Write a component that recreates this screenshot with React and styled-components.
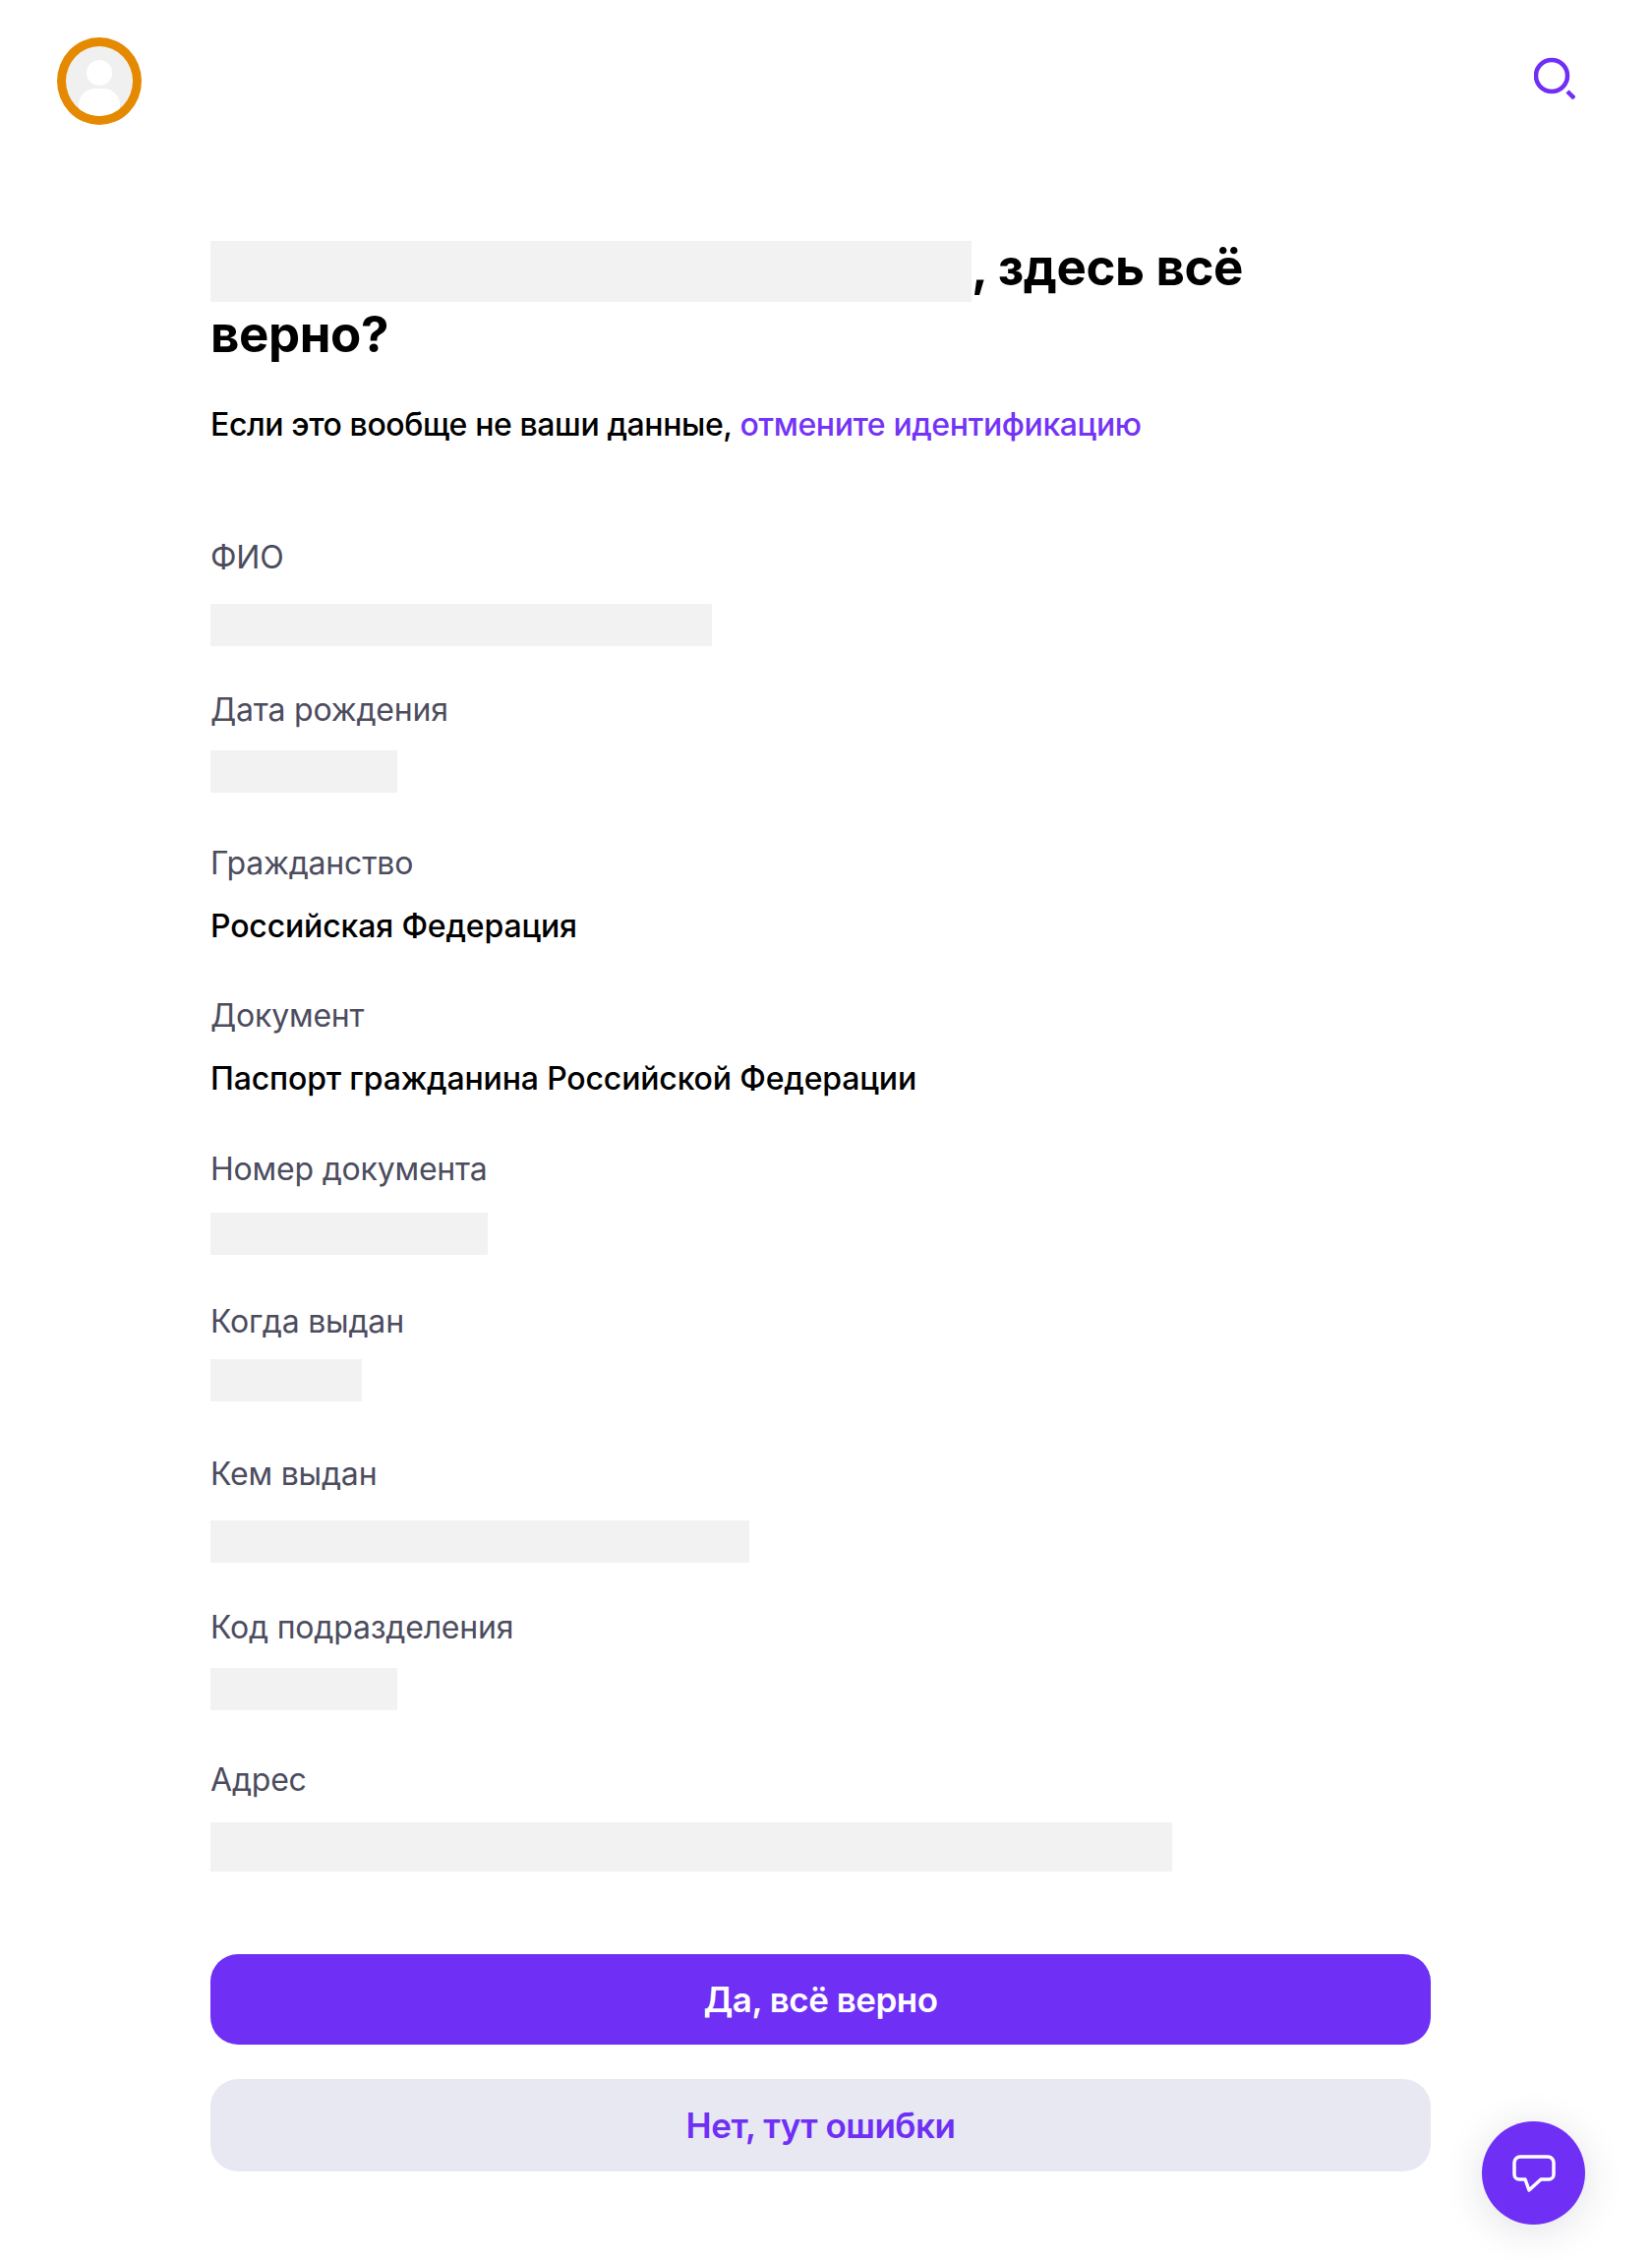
import React from "react";
import styled, { createGlobalStyle } from "styled-components";

const GlobalStyle = createGlobalStyle`
  html, body {
    margin: 0;
    padding: 0;
    background: #fff;
  }
  body {
    font-family: Inter, "Noto Sans", "Liberation Sans", sans-serif;
    color: #000;
  }
`;

const Page = styled.div`
  min-height: 2298px;
  box-sizing: border-box;
`;
const Header = styled.header`
  display: flex;
  justify-content: space-between;
  align-items: flex-start;
  padding: 38px 78px 0 58px;
`;
const Avatar = styled.div`
  width: 86px;
  height: 89px;
  box-sizing: border-box;
  border: 9px solid #e58a00;
  border-radius: 50%;
  background: #f0f0f0;
  overflow: hidden;
`;
const SearchButton = styled.div`
  display: flex;
  margin-top: 19px;
`;
const Main = styled.main`
  width: 1241px;
  margin: 112px 0 0 214px;
`;
const Title = styled.h1`
  margin: 0;
  max-width: 1100px;
  font-size: 51px;
  line-height: 65px;
  font-weight: 700;
  letter-spacing: -0.4px;
`;
const Hidden = styled.span`
  display: inline-block;
  width: ${({ $w }) => $w}px;
  height: ${({ $h }) => $h || 43}px;
  background: #f2f2f2;
`;
const TitleHidden = styled(Hidden)`
  vertical-align: -17px;
`;
const Subtitle = styled.p`
  margin: 38px 0 0;
  font-size: 32px;
  line-height: 44px;
  font-weight: 500;
  letter-spacing: -0.4px;
`;
const LinkText = styled.a`
  color: #7433f6;
`;
const Fields = styled.div`
  margin-top: 91px;
`;
const Field = styled.div`
  height: 155.4px;
`;
const Label = styled.div`
  font-size: 32px;
  line-height: 44px;
  color: #4c4c5e;
  letter-spacing: -0.2px;
`;
const Value = styled.div`
  margin-top: 20px;
  font-size: 32px;
  line-height: 44px;
  font-weight: 500;
  letter-spacing: -0.15px;
`;
const FieldHidden = styled(Hidden)`
  display: block;
  margin-top: ${({ $top }) => $top}px;
`;
const Actions = styled.div`
  display: flex;
  flex-direction: column;
  gap: 35px;
  margin-top: 43px;
`;
const Button = styled.button`
  height: ${({ $secondary }) => ($secondary ? 94 : 92)}px;
  border: 0;
  border-radius: 28px;
  background: ${({ $secondary }) => ($secondary ? "#e8e8f3" : "#6f2ff5")};
  color: ${({ $secondary }) => ($secondary ? "#6f2ff5" : "#fff")};
  font-family: inherit;
  font-size: 35px;
  font-weight: 600;
  letter-spacing: -0.5px;
`;
const ChatButton = styled.div`
  position: fixed;
  right: 68px;
  bottom: 36px;
  width: 105px;
  height: 105px;
  border-radius: 50%;
  background: #6f2ff5;
  display: flex;
  align-items: center;
  justify-content: center;
  box-shadow: 0 6px 40px rgba(40, 40, 80, 0.14);
`;

const fields = [
  { label: "ФИО", hidden: 510, top: 25 },
  { label: "Дата рождения", hidden: 190, top: 19 },
  { label: "Гражданство", value: "Российская Федерация" },
  { label: "Документ", value: "Паспорт гражданина Российской Федерации" },
  { label: "Номер документа", hidden: 282, top: 22 },
  { label: "Когда выдан", hidden: 154, top: 16 },
  { label: "Кем выдан", hidden: 548, top: 25 },
  { label: "Код подразделения", hidden: 190, top: 19 },
  { label: "Адрес", hidden: 978, top: 21, height: 50 },
];

const App = () => {
  return (
    <Page>
      <GlobalStyle />
      <Header>
        <Avatar>
          <svg width="68" height="71" viewBox="0 0 68 71">
            <circle cx="34" cy="27" r="13" fill="#fff" />
            <path d="M13 71V60c0-10 8-17 17-17h8c9 0 17 7 17 17v11z" fill="#fff" />
          </svg>
        </Avatar>
        <SearchButton>
          <svg width="42" height="44" viewBox="0 0 42 44" fill="none" stroke="#6f2ff5">
            <circle cx="18" cy="20" r="16" strokeWidth="4.5" />
            <path d="M34 36l7 7" strokeWidth="4.5" />
          </svg>
        </SearchButton>
      </Header>
      <Main>
        <Title>
          <TitleHidden $w={774} $h={62} />, здесь всё верно?
        </Title>
        <Subtitle>
          Если это вообще не ваши данные, <LinkText>отмените идентификацию</LinkText>
        </Subtitle>
        <Fields>
          {fields.map((f) => (
            <Field key={f.label}>
              <Label>{f.label}</Label>
              {f.value ? (
                <Value>{f.value}</Value>
              ) : (
                <FieldHidden $w={f.hidden} $top={f.top} $h={f.height} />
              )}
            </Field>
          ))}
        </Fields>
        <Actions>
          <Button>Да, всё верно</Button>
          <Button $secondary>Нет, тут ошибки</Button>
        </Actions>
      </Main>
      <ChatButton>
        <svg width="44" height="38" viewBox="0 0 44 38" fill="none" stroke="#fff" strokeWidth="3.5" strokeLinejoin="round">
          <path d="M8 2h28a6 6 0 0 1 6 6v12a5 5 0 0 1-5 5H29L17 36l-4-11H7a5 5 0 0 1-5-5V8a6 6 0 0 1 6-6z" />
        </svg>
      </ChatButton>
    </Page>
  );
};

export default App;
